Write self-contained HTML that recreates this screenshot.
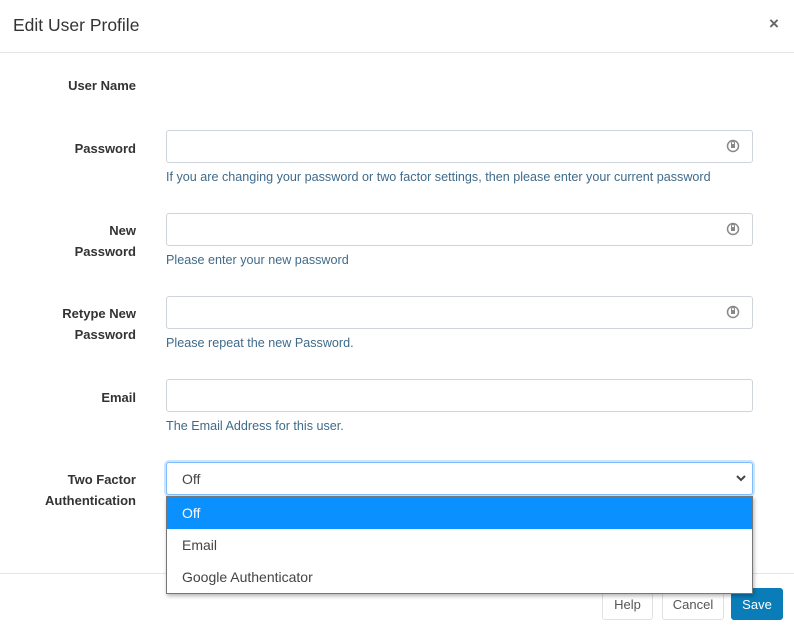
<!DOCTYPE html>
<html><head><style>
body{margin:0;width:794px;height:631px;background:#fff;font-family:"Liberation Sans",sans-serif;position:relative;overflow:hidden;color:#333}
.a{position:absolute}
.lbl{position:absolute;right:658px;text-align:right;font-weight:bold;font-size:13px;line-height:21px;color:#333}
.inp{position:absolute;left:166px;width:585px;height:31px;border:1px solid #ced4da;border-radius:3px;background:#fff}
.hint{position:absolute;left:166px;font-size:12.6px;color:#3f6b8a}
.ic{position:absolute;right:12px;top:8px;width:14px;height:14px}
.btn{position:absolute;top:588px;height:31px;border:1px solid #dee2e6;border-radius:3px;font-size:13px;line-height:31px;text-align:center;color:#555;background:#fff;box-sizing:border-box;height:32px}
</style></head><body>
<div class="a" style="left:13px;top:15px;font-size:17.5px;color:#333">Edit User Profile</div>
<div class="a" style="left:769px;top:14px;font-size:17px;color:#666;font-weight:bold">×</div>
<div class="a" style="left:0;top:52px;width:794px;height:1px;background:#e5e5e5"></div>

<div class="lbl" style="top:75px">User Name</div>

<div class="lbl" style="top:138px">Password</div>
<div class="inp" style="top:130px"><svg class="ic" viewBox="0 0 14 14"><circle cx="7" cy="7" r="5.5" fill="none" stroke="#888" stroke-width="1.5"/><rect x="5" y="5" width="4" height="4" fill="#888"/><path d="M5.5 5V4a1.5 1.5 0 013 0v1" fill="none" stroke="#888"/></svg></div>
<div class="hint" style="top:170px">If you are changing your password or two factor settings, then please enter your current password</div>

<div class="lbl" style="top:220px">New<br>Password</div>
<div class="inp" style="top:213px"><svg class="ic" viewBox="0 0 14 14"><circle cx="7" cy="7" r="5.5" fill="none" stroke="#888" stroke-width="1.5"/><rect x="5" y="5" width="4" height="4" fill="#888"/><path d="M5.5 5V4a1.5 1.5 0 013 0v1" fill="none" stroke="#888"/></svg></div>
<div class="hint" style="top:253px">Please enter your new password</div>

<div class="lbl" style="top:303px">Retype New<br>Password</div>
<div class="inp" style="top:296px"><svg class="ic" viewBox="0 0 14 14"><circle cx="7" cy="7" r="5.5" fill="none" stroke="#888" stroke-width="1.5"/><rect x="5" y="5" width="4" height="4" fill="#888"/><path d="M5.5 5V4a1.5 1.5 0 013 0v1" fill="none" stroke="#888"/></svg></div>
<div class="hint" style="top:336px">Please repeat the new Password.</div>

<div class="lbl" style="top:387px">Email</div>
<div class="inp" style="top:379px"></div>
<div class="hint" style="top:419px">The Email Address for this user.</div>

<div class="lbl" style="top:469px">Two Factor<br>Authentication</div>
<div class="inp" style="top:462px;border-color:#80bdff;box-shadow:0 0 0 2px rgba(0,123,255,.2)"><span class="a" style="left:15px;top:8px;font-size:14px;color:#444">Off</span><svg class="a" style="right:6px;top:11px" width="10" height="8" viewBox="0 0 10 8"><path d="M1 2l4 4 4-4" fill="none" stroke="#444" stroke-width="2"/></svg></div>

<div class="a" style="left:0;top:573px;width:794px;height:1px;background:#e5e5e5"></div>
<div class="btn" style="left:602px;width:51px">Help</div>
<div class="btn" style="left:662px;width:62px">Cancel</div>
<div class="btn" style="left:731px;width:52px;background:#0a7db8;border-color:#0a7db8;color:#fff">Save</div>

<div class="a" style="left:166px;top:496px;width:585px;height:96px;border:1px solid #777;background:#fff;box-shadow:1px 2px 4px rgba(0,0,0,.3);font-size:14px">
<div style="height:32px;line-height:32px;padding-left:15px;background:#0a90ff;color:#fff">Off</div>
<div style="height:32px;line-height:32px;padding-left:15px;color:#444">Email</div>
<div style="height:32px;line-height:32px;padding-left:15px;color:#444">Google Authenticator</div>
</div>
</body></html>
